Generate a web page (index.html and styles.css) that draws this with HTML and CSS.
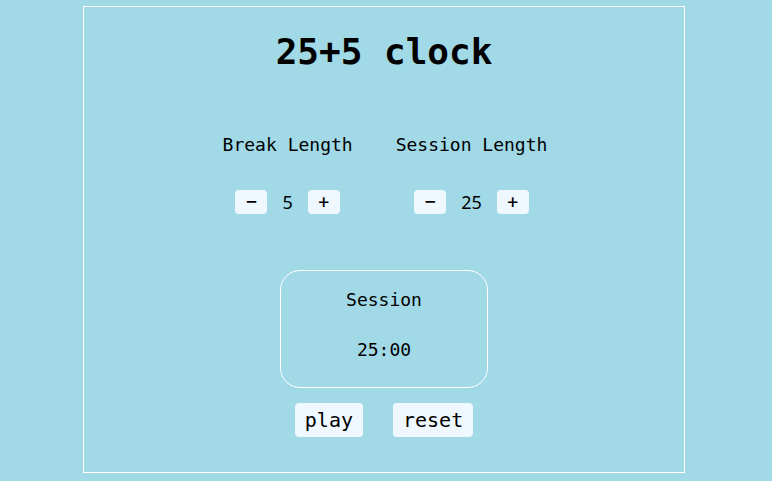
FILE: index.html
```html
<!DOCTYPE html>
<html lang="en">
<head>
<meta charset="utf-8">
<title>25+5 clock</title>
<link rel="stylesheet" href="styles.css">
</head>
<body>
<div class="app">
  <h1 class="title">25+5 clock</h1>
  <div class="settings">
    <div class="setting">
      <div class="setting-label">Break Length</div>
      <div class="controls">
        <button class="step">−</button>
        <span class="value">5</span>
        <button class="step">+</button>
      </div>
    </div>
    <div class="setting">
      <div class="setting-label">Session Length</div>
      <div class="controls">
        <button class="step">−</button>
        <span class="value">25</span>
        <button class="step">+</button>
      </div>
    </div>
  </div>
  <div class="timer">
    <div class="timer-label">Session</div>
    <div class="timer-time">25:00</div>
  </div>
  <div class="actions">
    <button class="action">play</button>
    <button class="action">reset</button>
  </div>
</div>
</body>
</html>
```
FILE: styles.css
```css
html, body {
  margin: 0;
  padding: 0;
  background: #a1d9e6;
}
body {
  font-family: "DejaVu Sans Mono", monospace;
  color: #000;
}
.app {
  box-sizing: border-box;
  width: 602px;
  height: 467px;
  margin: 6px 0 0 83px;
  border: 1px solid #fff;
  display: flex;
  flex-direction: column;
  align-items: center;
}
.title {
  margin: 24px 0 0;
  font-size: 36px;
  font-weight: bold;
  line-height: 42px;
}
.settings {
  margin-top: 61px;
  padding-left: 2px;
  display: flex;
  gap: 43px;
}
.setting {
  display: flex;
  flex-direction: column;
  align-items: center;
}
.setting-label {
  font-size: 18px;
  line-height: 21px;
}
.controls {
  margin-top: 35px;
  display: flex;
  align-items: center;
}
.step {
  box-sizing: border-box;
  width: 32px;
  height: 24px;
  padding: 0;
  border: none;
  border-radius: 4px;
  background: #eff8ff;
  font-family: "Noto Sans", sans-serif;
  font-size: 20px;
  font-weight: 500;
  line-height: 24px;
  color: #000;
}
.value {
  margin: 0 15px;
  font-family: "Noto Sans", sans-serif;
  font-size: 18px;
  line-height: 24px;
}
.timer {
  box-sizing: border-box;
  margin-top: 56px;
  width: 208px;
  height: 118px;
  border: 1px solid #fff;
  border-radius: 20px;
  display: flex;
  flex-direction: column;
  align-items: center;
  padding-top: 18px;
  font-size: 18px;
  line-height: 21px;
}
.timer-time {
  margin-top: 29px;
}
.actions {
  margin-top: 15px;
  display: flex;
  gap: 30px;
}
.action {
  box-sizing: border-box;
  height: 34px;
  padding: 0 10px;
  border: none;
  border-radius: 4px;
  background: #eff8ff;
  font-family: "DejaVu Sans Mono", monospace;
  font-size: 20px;
  line-height: 34px;
  color: #000;
}
```
